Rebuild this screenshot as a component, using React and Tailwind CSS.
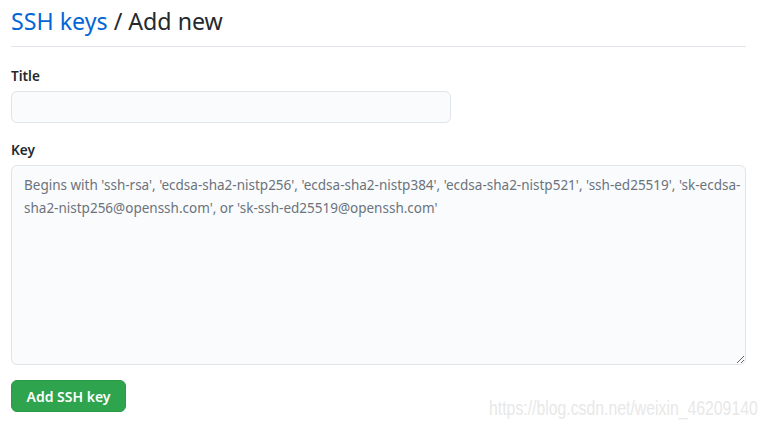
import React from 'react';

export default function App() {
  return (
    <div
      className="relative w-[769px] h-[429px] bg-white text-[#24292e] overflow-hidden"
      style={{ fontFamily: '"Noto Sans", "Liberation Sans", sans-serif' }}
    >
      <div className="pl-[11px] pr-[23px]">
        {/* Header */}
        <div className="flex items-end h-[47px] border-b border-[#e1e4e8] pb-[10px]">
          <h2 className="text-[23.2px] leading-[30px] font-normal">
            <a className="text-[#0366d6]" href="#">SSH keys</a> / Add new
          </h2>
        </div>

        {/* Form */}
        <form className="pt-[18px]">
          <dl>
            <dt className="text-[13.6px] leading-[21px] font-semibold mb-[5px]">Title</dt>
            <dd>
              <input
                type="text"
                className="block w-[440px] h-[32px] px-[12px] text-[14px] bg-[#fafbfc] border border-[#e1e4e8] rounded-[6px] outline-none"
              />
            </dd>
          </dl>

          <dl className="mt-[16px]">
            <dt className="text-[13.6px] leading-[21px] font-semibold mb-[5px]">Key</dt>
            <dd>
              <textarea
                className="block w-[735px] h-[200px] pl-[12px] pr-0 py-[8px] text-[13.5px] leading-[23px] bg-[#fafbfc] border border-[#e1e4e8] rounded-[6px] outline-none resize-y overflow-hidden placeholder:text-[#6a737d]"
                placeholder="Begins with 'ssh-rsa', 'ecdsa-sha2-nistp256', 'ecdsa-sha2-nistp384', 'ecdsa-sha2-nistp521', 'ssh-ed25519', 'sk-ecdsa-sha2-nistp256@openssh.com', or 'sk-ssh-ed25519@openssh.com'"
              />
            </dd>
          </dl>

          <button
            type="button"
            className="block mt-[15px] h-[32px] w-[115px] rounded-[6px] bg-[#2ea44f] border border-[#2a9a4a] text-white text-[14px] font-semibold"
          >
            Add SSH key
          </button>
        </form>
      </div>

      {/* Watermark */}
      <div
        className="absolute right-[11px] top-[399px] text-[19.5px] leading-none text-[#e8e8e8] whitespace-nowrap scale-x-[0.81] origin-right"
        style={{ fontFamily: '"Liberation Sans", Arial, sans-serif' }}
      >
        https://blog.csdn.net/weixin_46209140
      </div>
    </div>
  );
}
